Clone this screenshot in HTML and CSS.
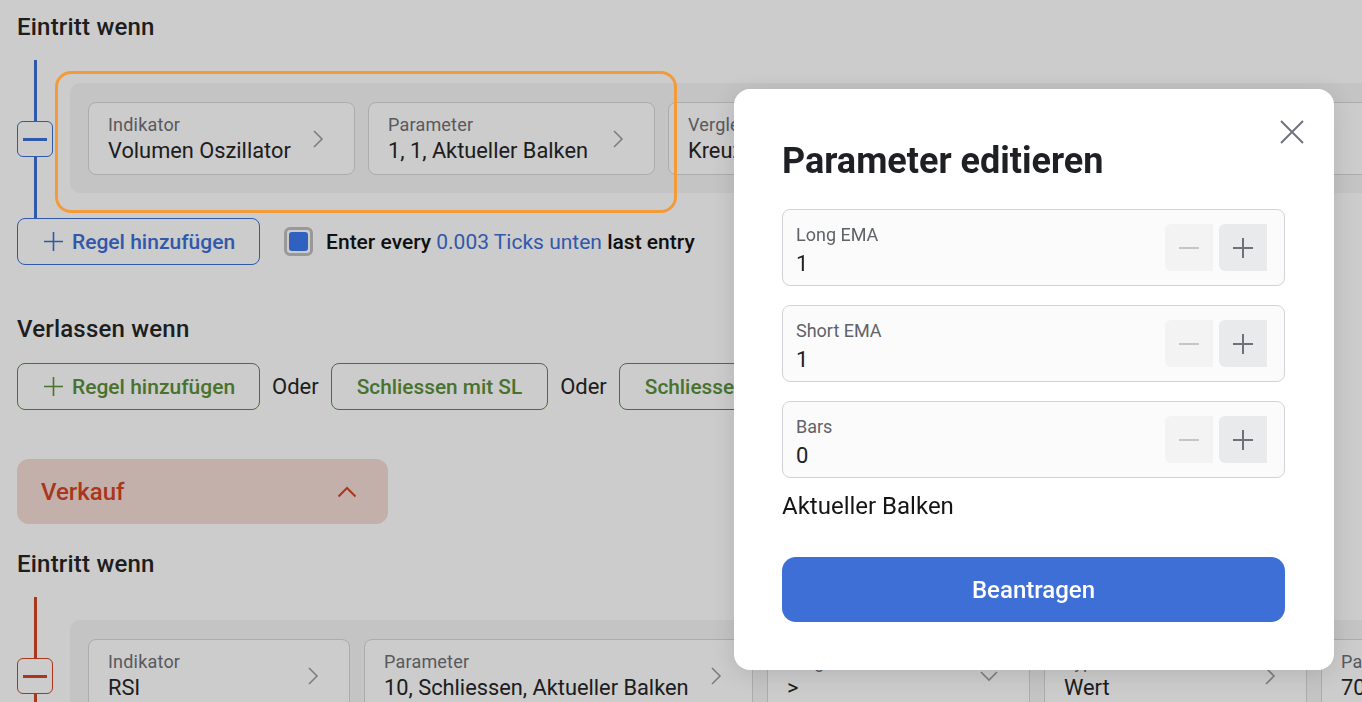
FILE: index.html
```html
<!DOCTYPE html>
<html lang="de">
<head>
    <meta charset="UTF-8">
    <title>Strategie</title>
    <link rel="stylesheet" href="styles.css">
</head>
<body>
    <div class="page">
        <h3 class="section-title">Eintritt wenn</h3>
        <div class="rule-row">
            <div class="rule-rail rail-blue">
                <span class="rail-line"></span>
                <button class="rail-btn"><span></span></button>
                <span class="rail-line"></span>
            </div>
            <div class="rule-group">
                <div class="field w-267">
                    <div class="field-text">
                        <span class="field-label">Indikator</span>
                        <span class="field-value">Volumen Oszillator</span>
                    </div>
                    <svg class="chev" width="12" height="20" viewBox="0 0 12 20"><path d="M2 2l8 8-8 8" fill="none" stroke="#9e9e9e" stroke-width="1.6"/></svg>
                </div>
                <div class="field w-287">
                    <div class="field-text">
                        <span class="field-label">Parameter</span>
                        <span class="field-value">1, 1, Aktueller Balken</span>
                    </div>
                    <svg class="chev" width="12" height="20" viewBox="0 0 12 20"><path d="M2 2l8 8-8 8" fill="none" stroke="#9e9e9e" stroke-width="1.6"/></svg>
                </div>
                <div class="field w-267">
                    <div class="field-text">
                        <span class="field-label">Vergleich</span>
                        <span class="field-value">Kreuzt</span>
                    </div>
                    <svg class="chev" width="20" height="12" viewBox="0 0 20 12"><path d="M2 2l8 8 8-8" fill="none" stroke="#9e9e9e" stroke-width="1.6"/></svg>
                </div>
                <div class="field w-267">
                    <div class="field-text">
                        <span class="field-label">Typ</span>
                        <span class="field-value">Indikator</span>
                    </div>
                    <svg class="chev" width="12" height="20" viewBox="0 0 12 20"><path d="M2 2l8 8-8 8" fill="none" stroke="#9e9e9e" stroke-width="1.6"/></svg>
                </div>
                <div class="field w-267">
                    <div class="field-text">
                        <span class="field-label">Indikator</span>
                        <span class="field-value">Volumen</span>
                    </div>
                </div>
            </div>
            <div class="tour-highlight"></div>
        </div>

        <div class="action-row">
            <button class="add-btn btn-blue">
                <svg width="19" height="19" viewBox="0 0 19 19"><path d="M9.5 0v19M0 9.5h19" stroke="currentColor" stroke-width="1.6"/></svg>
                <span>Regel hinzufügen</span>
            </button>
            <label class="check-row">
                <span class="checkbox"><span></span></span>
                <span class="check-text">Enter every <span class="link-blue">0.003 Ticks unten</span> last entry</span>
            </label>
        </div>

        <h3 class="section-title mt-51">Verlassen wenn</h3>
        <div class="action-row exit-row">
            <button class="add-btn btn-green">
                <svg width="19" height="19" viewBox="0 0 19 19"><path d="M9.5 0v19M0 9.5h19" stroke="currentColor" stroke-width="1.6"/></svg>
                <span>Regel hinzufügen</span>
            </button>
            <span class="oder">Oder</span>
            <button class="add-btn btn-green btn-plain">Schliessen mit SL</button>
            <span class="oder">Oder</span>
            <button class="add-btn btn-green btn-plain">Schliessen mit TP</button>
        </div>

        <div class="side-toggle">
            <span>Verkauf</span>
            <svg width="20" height="12" viewBox="0 0 20 12"><path d="M1.5 10.5l8.5-8.5 8.5 8.5" fill="none" stroke="#d44526" stroke-width="2"/></svg>
        </div>

        <h3 class="section-title mt-28">Eintritt wenn</h3>
        <div class="rule-row">
            <div class="rule-rail rail-red">
                <span class="rail-line"></span>
                <button class="rail-btn"><span></span></button>
                <span class="rail-line"></span>
            </div>
            <div class="rule-group gap-14">
                <div class="field w-262">
                    <div class="field-text">
                        <span class="field-label">Indikator</span>
                        <span class="field-value">RSI</span>
                    </div>
                    <svg class="chev" width="12" height="20" viewBox="0 0 12 20"><path d="M2 2l8 8-8 8" fill="none" stroke="#9e9e9e" stroke-width="1.6"/></svg>
                </div>
                <div class="field w-389">
                    <div class="field-text">
                        <span class="field-label">Parameter</span>
                        <span class="field-value">10, Schliessen, Aktueller Balken</span>
                    </div>
                    <svg class="chev" width="12" height="20" viewBox="0 0 12 20"><path d="M2 2l8 8-8 8" fill="none" stroke="#9e9e9e" stroke-width="1.6"/></svg>
                </div>
                <div class="field w-263">
                    <div class="field-text">
                        <span class="field-label">Vergleich</span>
                        <span class="field-value">&gt;</span>
                    </div>
                    <svg class="chev" width="20" height="12" viewBox="0 0 20 12"><path d="M2 2l8 8 8-8" fill="none" stroke="#9e9e9e" stroke-width="1.6"/></svg>
                </div>
                <div class="field w-263">
                    <div class="field-text">
                        <span class="field-label">Typ</span>
                        <span class="field-value">Wert</span>
                    </div>
                    <svg class="chev" width="12" height="20" viewBox="0 0 12 20"><path d="M2 2l8 8-8 8" fill="none" stroke="#9e9e9e" stroke-width="1.6"/></svg>
                </div>
                <div class="field w-263">
                    <div class="field-text">
                        <span class="field-label">Parameter</span>
                        <span class="field-value">70</span>
                    </div>
                </div>
            </div>
        </div>
    </div>

    <!-- Abdeckung -->
    <div class="overlay"></div>

    <div class="modal">
        <button class="modal-close">
            <svg width="24" height="24" viewBox="0 0 24 24"><path d="M1 1l22 22M23 1L1 23" stroke="#70747c" stroke-width="2"/></svg>
        </button>
        <h2 class="modal-title">Parameter editieren</h2>
        <div class="param-list">
            <div class="param-input">
                <div class="param-text">
                    <span class="param-label">Long EMA</span>
                    <span class="param-value">1</span>
                </div>
                <div class="stepper">
                    <button class="step step-minus"><svg width="20" height="20" viewBox="0 0 20 20"><path d="M0 10h20" stroke="#c5c6ca" stroke-width="2"/></svg></button>
                    <button class="step step-plus"><svg width="20" height="20" viewBox="0 0 20 20"><path d="M0 10h20M10 0v20" stroke="#6e717a" stroke-width="2"/></svg></button>
                </div>
            </div>
            <div class="param-input">
                <div class="param-text">
                    <span class="param-label">Short EMA</span>
                    <span class="param-value">1</span>
                </div>
                <div class="stepper">
                    <button class="step step-minus"><svg width="20" height="20" viewBox="0 0 20 20"><path d="M0 10h20" stroke="#c5c6ca" stroke-width="2"/></svg></button>
                    <button class="step step-plus"><svg width="20" height="20" viewBox="0 0 20 20"><path d="M0 10h20M10 0v20" stroke="#6e717a" stroke-width="2"/></svg></button>
                </div>
            </div>
            <div class="param-input">
                <div class="param-text">
                    <span class="param-label">Bars</span>
                    <span class="param-value">0</span>
                </div>
                <div class="stepper">
                    <button class="step step-minus"><svg width="20" height="20" viewBox="0 0 20 20"><path d="M0 10h20" stroke="#c5c6ca" stroke-width="2"/></svg></button>
                    <button class="step step-plus"><svg width="20" height="20" viewBox="0 0 20 20"><path d="M0 10h20M10 0v20" stroke="#6e717a" stroke-width="2"/></svg></button>
                </div>
            </div>
        </div>
        <p class="param-note">Aktueller Balken</p>
        <button class="apply-btn">Beantragen</button>
    </div>
</body>
</html>
```

FILE: styles.css
```css
html,
body{
    margin: 0;
    padding: 0;
}
body{
    width: 1362px;
    height: 702px;
    overflow: hidden;
    background: #ffffff;
    font-family: "Roboto", "Liberation Sans", sans-serif;
    color: #151515;
}
button{
    font-family: inherit;
    cursor: pointer;
}

.page{
    padding: 15px 0 0 17px;
}
.section-title{
    margin: 0;
    font-size: 24px;
    line-height: 24px;
    font-weight: 500;
    letter-spacing: 0.2px;
    color: #262626;
}
.mt-51{
    margin-top: 52px;
}
.mt-28{
    margin-top: 28px;
}

/* Regel-Zeile */
.rule-row{
    position: relative;
    display: flex;
    gap: 17px;
    margin-top: 21px;
}
.rule-rail{
    width: 36px;
    flex: none;
    display: flex;
    flex-direction: column;
    align-items: center;
}
.rail-line{
    flex: 1;
    width: 3px;
    background: currentColor;
}
.rail-blue{
    color: #3d6fd6;
}
.rail-red{
    color: #d44526;
}
.rail-btn{
    width: 36px;
    height: 36px;
    padding: 0;
    color: inherit;
    border: 1px solid currentColor;
    border-radius: 6px;
    background: #ffffff;
    display: flex;
    align-items: center;
    justify-content: center;
}
.rail-btn span{
    display: block;
    width: 24px;
    height: 3px;
    background: currentColor;
}
.rule-group{
    flex: none;
    display: flex;
    gap: 13px;
    margin: 23px 0 25px 0;
    padding: 19px 18px 18px 18px;
    background: #f5f5f5;
    border-radius: 10px;
}
.gap-14{
    gap: 14px;
}
.field{
    box-sizing: border-box;
    height: 73px;
    flex: none;
    display: flex;
    align-items: center;
    justify-content: space-between;
    padding: 0 30px 0 19px;
    border: 1px solid #d7d7d7;
    border-radius: 8px;
    background: #ffffff;
}
.w-262{ width: 262px; }
.w-263{ width: 263px; }
.w-267{ width: 267px; }
.w-287{ width: 287px; }
.w-389{ width: 389px; }
.field-text{
    display: flex;
    flex-direction: column;
    gap: 4px;
    white-space: nowrap;
}
.field-label{
    font-size: 18px;
    line-height: 21px;
    letter-spacing: 0.2px;
    color: #707076;
}
.field-value{
    font-size: 21.8px;
    line-height: 24px;
    color: #262626;
}
.chev{
    flex: none;
}
.tour-highlight{
    position: absolute;
    left: 38px;
    top: 11px;
    width: 622px;
    height: 142px;
    box-sizing: border-box;
    border: 3px solid #f39a3b;
    border-radius: 16px;
    z-index: 20;
}

/* Knöpfe */
.action-row{
    display: flex;
    align-items: center;
    gap: 24px;
}
.exit-row{
    gap: 12px;
    margin-top: 22px;
    white-space: nowrap;
}
.add-btn{
    height: 47px;
    flex: none;
    display: flex;
    align-items: center;
    gap: 9px;
    padding: 0 24px 0 26px;
    border: 1px solid currentColor;
    border-radius: 8px;
    background: #ffffff;
    font-size: 21px;
    font-weight: 500;
}
.btn-blue{
    color: #3d6fd6;
}
.btn-green{
    color: #5a8f3a;
}
.btn-plain{
    padding: 0 25px;
    font-size: 20.8px;
}
.oder{
    font-size: 22px;
    color: #262626;
}
.check-row{
    display: flex;
    align-items: center;
}
.check-text{
    font-size: 21px;
    font-weight: 500;
    color: #151515;
    white-space: nowrap;
}
.checkbox{
    width: 29px;
    height: 29px;
    box-sizing: border-box;
    padding: 2px;
    margin-right: 13px;
    border: 3px solid #c0c0c0;
    border-radius: 6px;
}
.checkbox span{
    display: block;
    width: 100%;
    height: 100%;
    background: #3c78f0;
    border-radius: 3px;
}
.link-blue{
    color: #3d6fd6;
    font-weight: 400;
}

.side-toggle{
    width: 371px;
    height: 65px;
    box-sizing: border-box;
    margin-top: 49px;
    padding: 0 31px 0 24px;
    display: flex;
    align-items: center;
    justify-content: space-between;
    background: #f4dcd6;
    border-radius: 12px;
    color: #d44526;
    font-size: 24px;
    font-weight: 500;
}

.overlay{
    position: fixed;
    inset: 0;
    background: rgba(0, 0, 0, 0.2);
    z-index: 10;
}

/* Dialog */
.modal{
    position: absolute;
    left: 734px;
    top: 89px;
    width: 600px;
    box-sizing: border-box;
    padding: 52px 49px 48px 48px;
    background: #ffffff;
    border-radius: 16px;
    box-shadow: 0 4px 24px rgba(0, 0, 0, 0.12);
    z-index: 30;
}
.modal-close{
    position: absolute;
    top: 31px;
    right: 30px;
    width: 24px;
    height: 24px;
    padding: 0;
    border: 0;
    background: none;
}
.modal-close svg{
    display: block;
}
.modal-title{
    margin: 0 0 28px 0;
    font-size: 36px;
    line-height: 40px;
    font-weight: 700;
    color: #1f2024;
}
.param-list{
    display: flex;
    flex-direction: column;
    gap: 19px;
}
.param-input{
    height: 77px;
    box-sizing: border-box;
    display: flex;
    align-items: center;
    justify-content: space-between;
    padding: 0 17px 0 13px;
    border: 1px solid #d2d2d8;
    border-radius: 8px;
    background: #fbfbfb;
}
.param-text{
    align-self: flex-start;
    padding-top: 15px;
    display: flex;
    flex-direction: column;
    gap: 6px;
}
.param-label{
    font-size: 18px;
    line-height: 20px;
    color: #5f6368;
}
.param-value{
    font-size: 22px;
    line-height: 26px;
    color: #202124;
}
.stepper{
    display: flex;
    gap: 6px;
}
.step{
    width: 48px;
    height: 47px;
    padding: 0;
    border: 0;
    border-radius: 6px 0 0 6px;
    display: flex;
    align-items: center;
    justify-content: center;
}
.step-minus{
    background: #f3f3f4;
}
.step-plus{
    background: #e9eaec;
}
.param-note{
    margin: 14px 0 0 0;
    font-size: 24px;
    line-height: 28px;
    color: #151515;
}
.apply-btn{
    display: block;
    width: 100%;
    height: 65px;
    margin-top: 37px;
    border: 0;
    border-radius: 14px;
    background: #3d6fd6;
    color: #ffffff;
    font-size: 24px;
    font-weight: 500;
}
```
